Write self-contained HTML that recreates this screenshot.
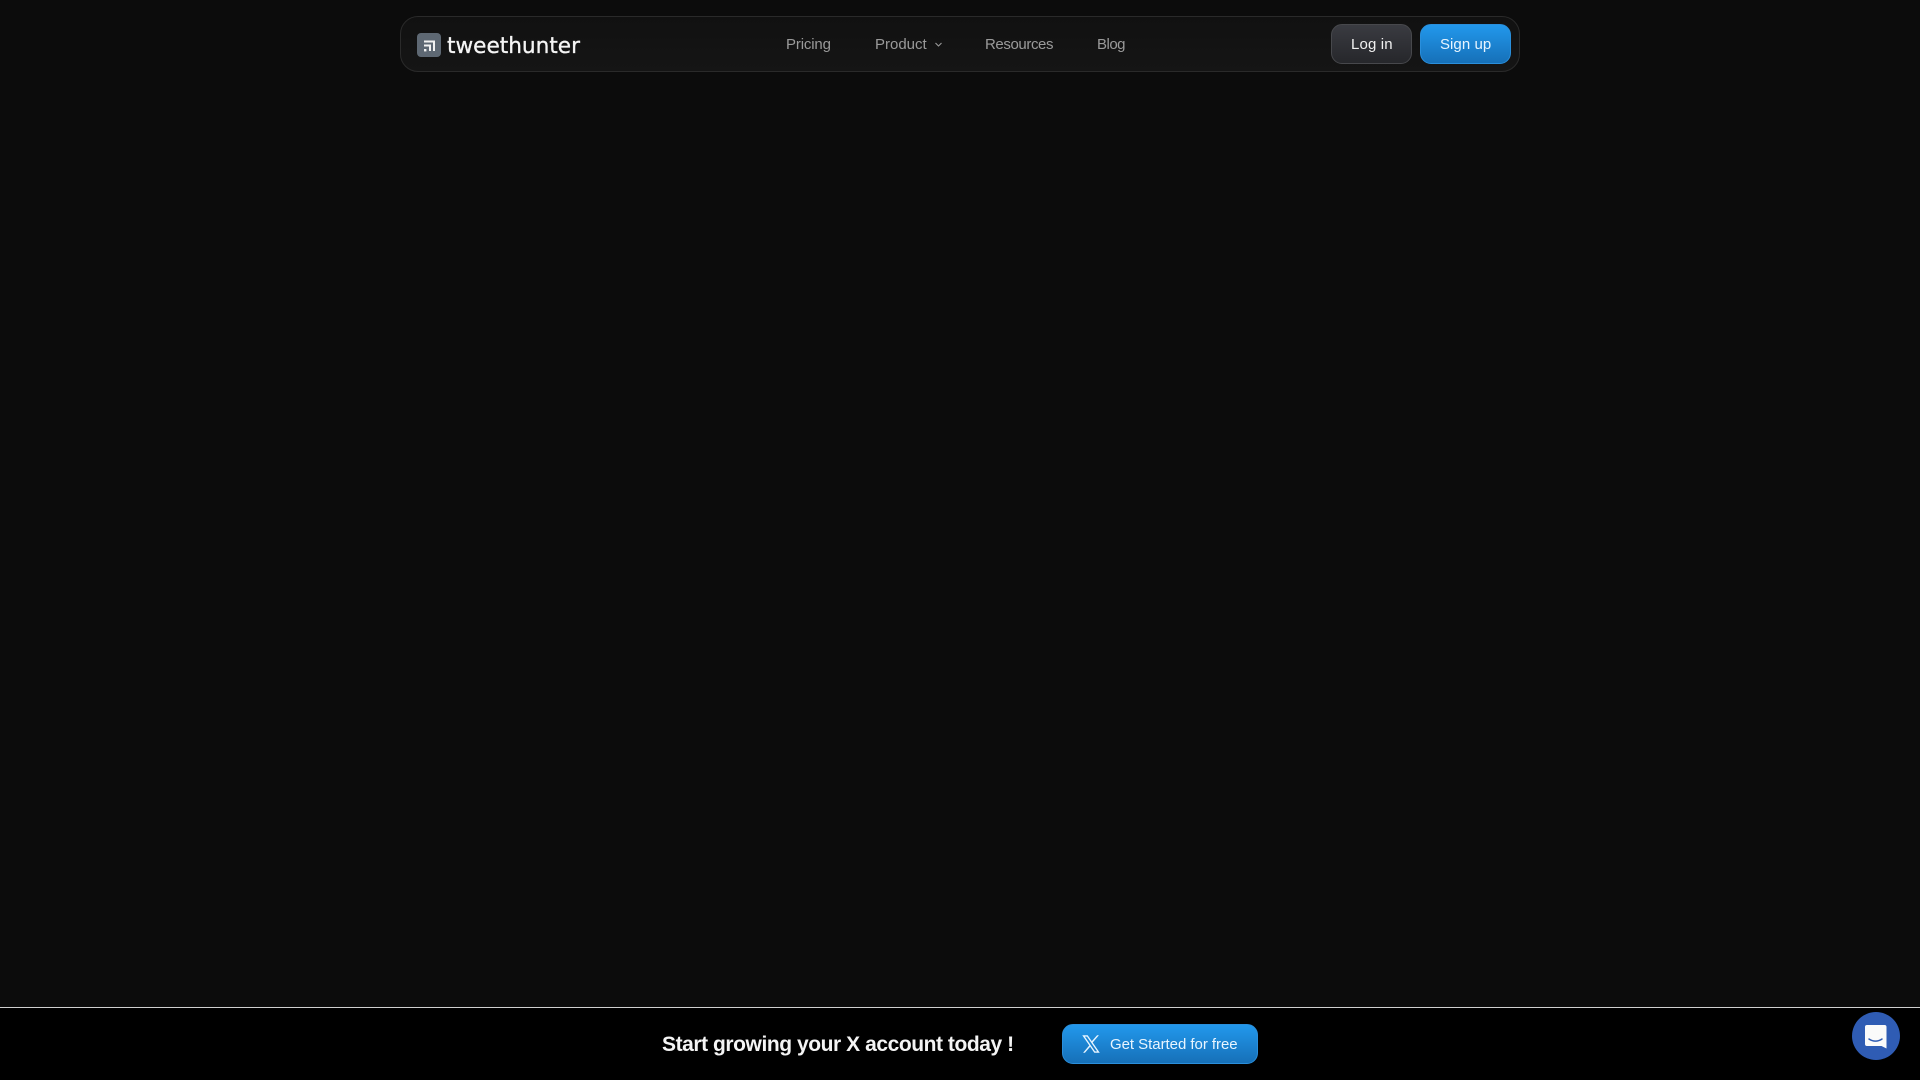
<!DOCTYPE html>
<html lang="en">
<head>
<meta charset="utf-8">
<title>tweethunter</title>
<style>
html,body{margin:0;padding:0;width:1920px;height:1080px;overflow:hidden;background:#0c0c0c;font-family:"Liberation Sans",sans-serif}
#page{position:relative;width:1920px;height:1080px;overflow:hidden;background:#0c0c0c}
.abs{position:absolute}
.nav{left:400px;top:16px;width:1118px;height:54px;border:1px solid #2a2a2a;border-radius:18px;background:linear-gradient(#111,#151515)}
.t{position:absolute;white-space:nowrap;line-height:20px}
.link{top:35px;font-size:15px;color:#9a9a9a}
.btn{position:absolute;box-sizing:border-box;height:40px;border-radius:11px}
.blue{background:linear-gradient(#2298ec,#1670b8);border:1px solid #2a8fdc}
.gray{background:linear-gradient(#3a3b41,#26272b);border:1px solid #47484c}
.bar{left:0;top:1007px;width:1920px;height:73px;background:#000;border-top:1px solid #d0d0d0;box-sizing:border-box}
</style>
</head>
<body>
<div id="page">
  <div class="abs nav"></div>

  <svg class="abs" style="left:417px;top:33px" width="24" height="24" viewBox="0 0 24 24">
    <rect width="24" height="24" rx="4" fill="#5e6873"/>
    <path d="M7 8.500H17V18" fill="none" stroke="#f2f2f2" stroke-width="2"/>
    <path d="M7 12.500H13V18" fill="none" stroke="#f2f2f2" stroke-width="2"/>
    <rect x="7" y="16" width="2.400" height="2.400" fill="#f2f2f2"/>
  </svg>
  <svg class="abs" style="left:445px;top:28px" width="140" height="34" viewBox="0 0 140 34">
    <text x="2" y="25" font-family="DejaVu Sans, sans-serif" font-size="22" fill="#f5f5f5" stroke="#f5f5f5" stroke-width=".3" textLength="133" lengthAdjust="spacingAndGlyphs">tweethunter</text>
  </svg>

  <span class="t link" style="left:786px;letter-spacing:-.15px">Pricing</span>
  <span class="t link" style="left:875px;letter-spacing:0">Product</span>
  <svg class="abs" style="left:934px;top:41px" width="9" height="7" viewBox="0 0 9 7"><path d="M1.500 2L4.500 5L7.500 2" fill="none" stroke="#9a9a9a" stroke-width="1.100"/></svg>
  <span class="t link" style="left:985px;letter-spacing:-.4px">Resources</span>
  <span class="t link" style="left:1097px;letter-spacing:-.5px">Blog</span>

  <div class="btn gray" style="left:1331px;top:24px;width:81px"></div>
  <span class="t" style="left:1351px;top:35px;font-size:15px;color:#f0f0f0;letter-spacing:.15px">Log in</span>
  <div class="btn blue" style="left:1420px;top:24px;width:91px"></div>
  <span class="t" style="left:1440px;top:35px;font-size:15px;color:#e8f5ff;letter-spacing:.05px">Sign up</span>

  <div class="abs bar"></div>
  <span class="t" style="left:662px;top:1035px;font-size:21px;font-weight:700;color:#f4f4f4;letter-spacing:-.44px">Start growing your X account today !</span>

  <div class="btn blue" style="left:1062px;top:1024px;width:196px"></div>
  <svg class="abs" style="left:1081px;top:1034px" width="20" height="20" viewBox="0 0 24 24">
    <path d="M1.500 1.500H8L22.500 22.500H16Z M4.600 3.100H7.200L19.400 20.900H16.800Z" fill="#e8f5ff" fill-rule="evenodd"/>
    <path d="M21.500 1.500H19.300L12 9.700L13.100 11.300Z M2.500 22.500H4.700L11.100 15.200L10 13.600Z" fill="#e8f5ff"/>
  </svg>
  <span class="t" style="left:1110px;top:1035px;font-size:15px;color:#e8f5ff;letter-spacing:-.04px">Get Started for free</span>

  <svg class="abs" style="left:1852px;top:1012px" width="48" height="48" viewBox="0 0 48 48">
    <circle cx="24" cy="24" r="24" fill="#2f5cb4"/>
    <path d="M15 13H32.500A2 2 0 0 1 34.500 15V36.500L29.500 34H15A2 2 0 0 1 13 32V15A2 2 0 0 1 15 13Z" fill="#fafafa"/>
    <path d="M17 27C21 29.800 26 29.800 30 27" fill="none" stroke="#2f5cb4" stroke-width="1.500" stroke-linecap="round"/>
  </svg>
</div>
</body>
</html>
